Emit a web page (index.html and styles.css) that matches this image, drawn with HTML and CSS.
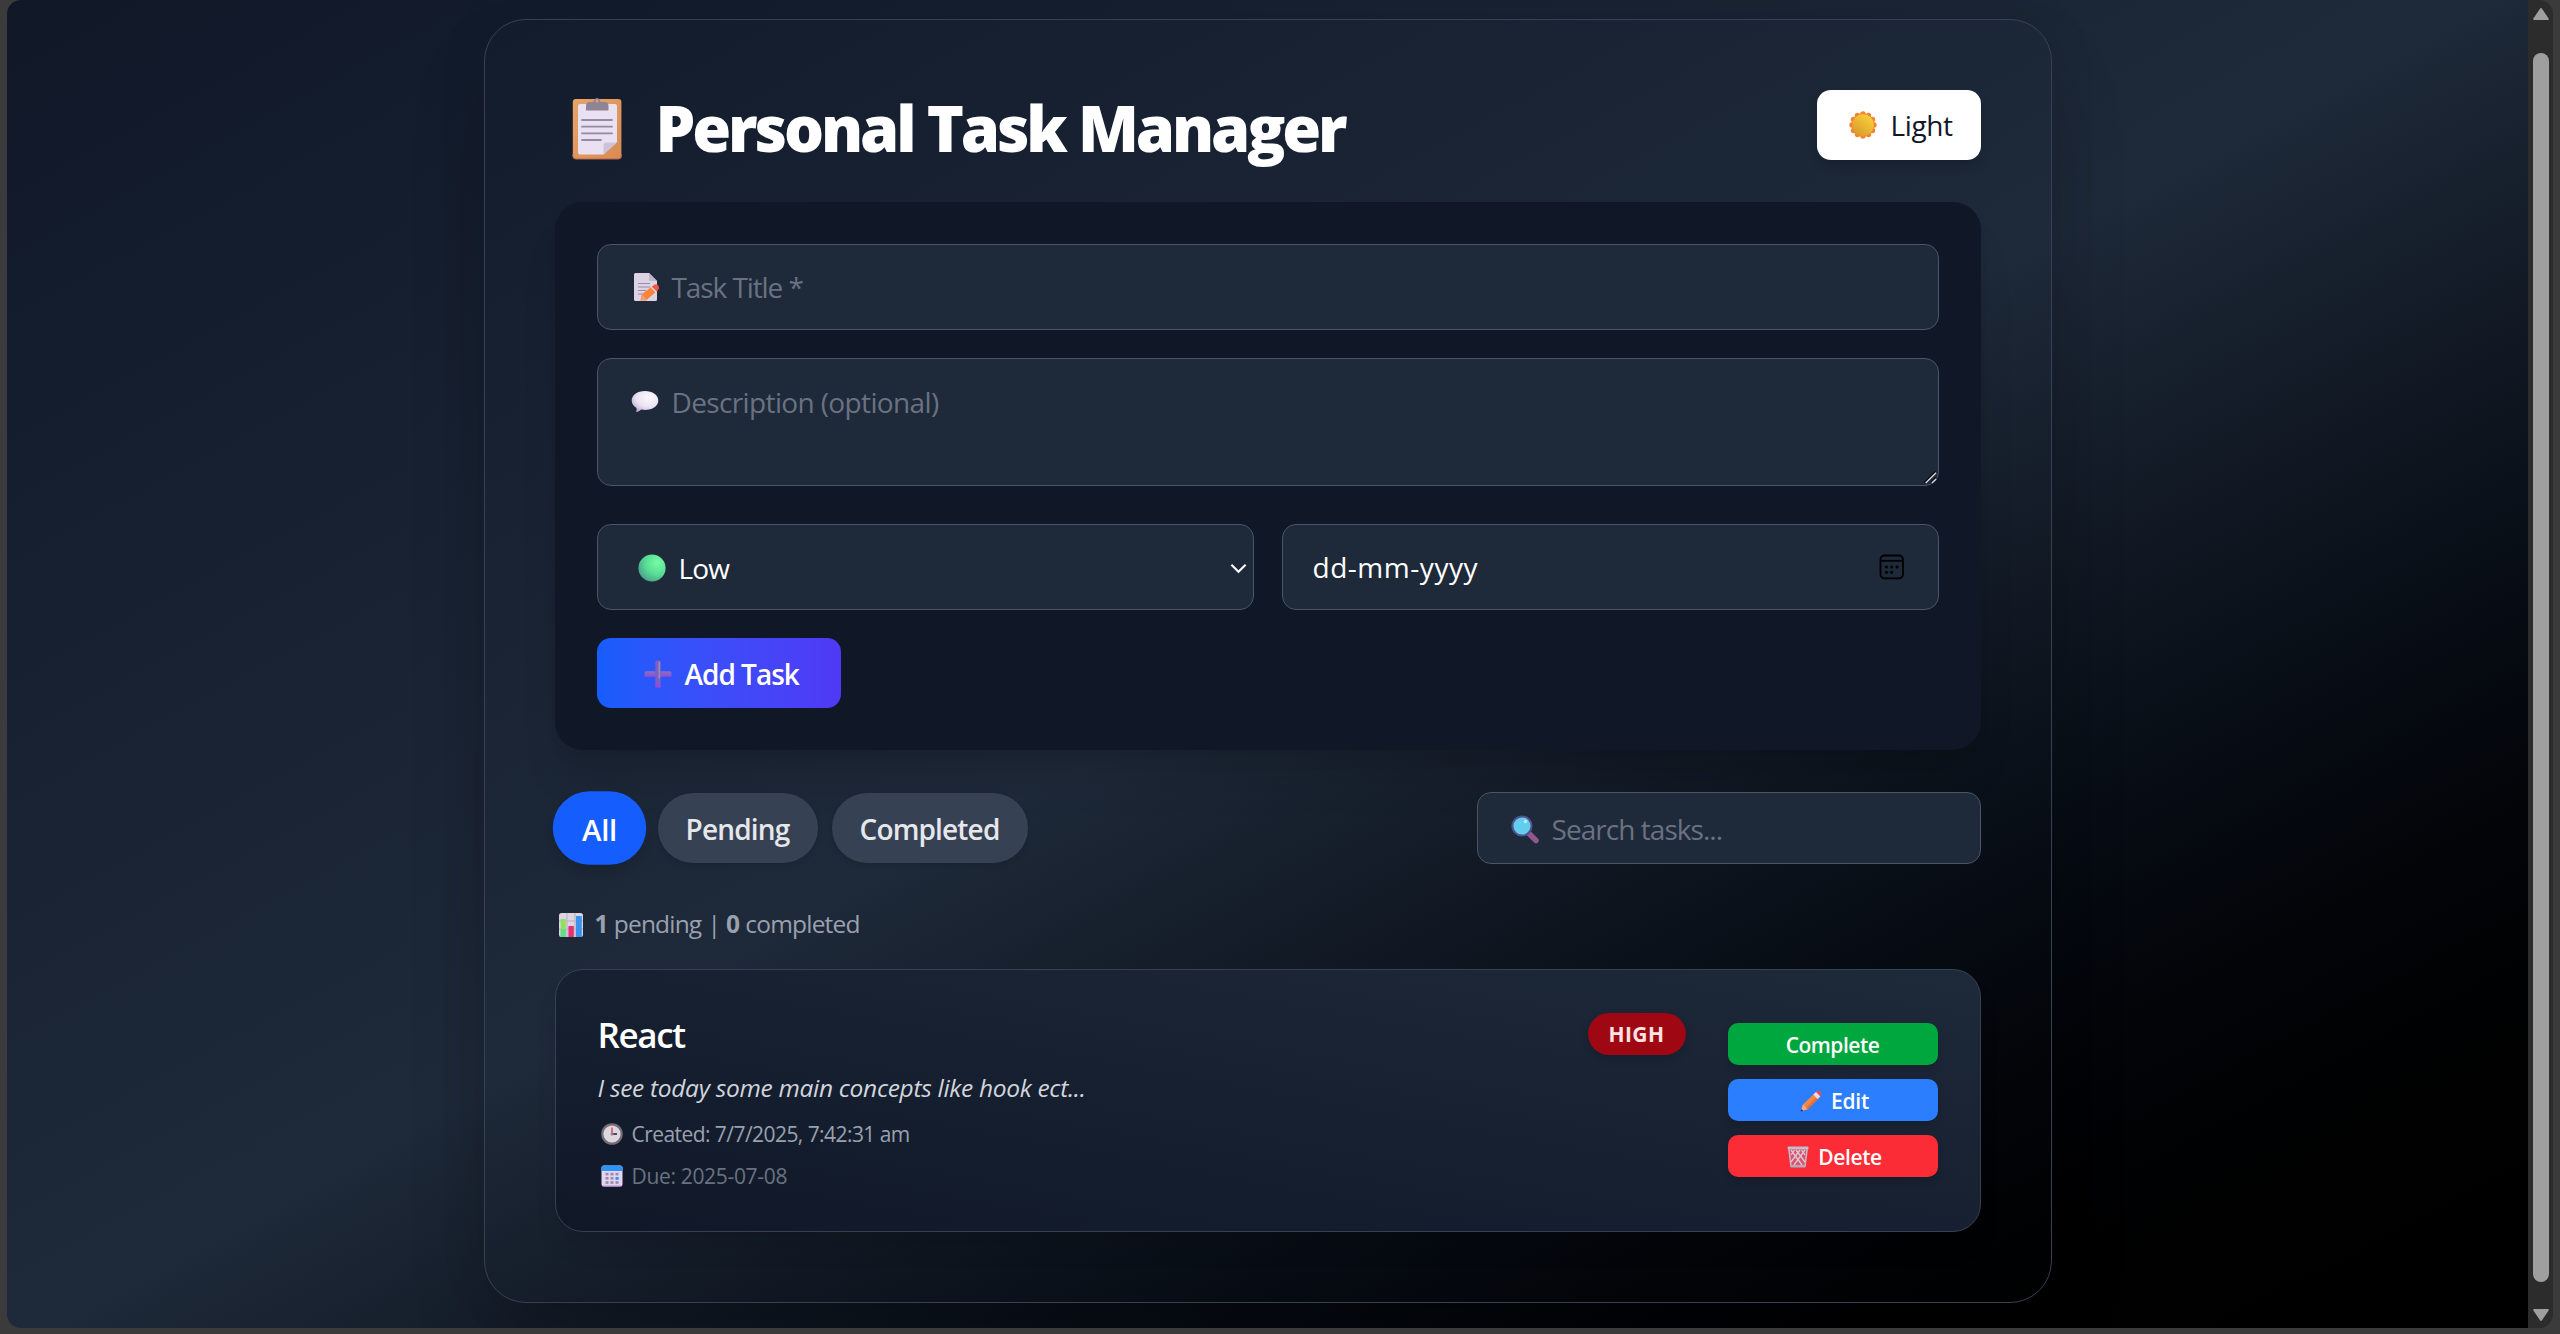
FILE: index.html
```
<!DOCTYPE html>
<html lang="en">
<head>
<meta charset="utf-8">
<title>Personal Task Manager</title>
<link rel="stylesheet" href="styles.css">
</head>
<body>
<div class="page">
  <main class="panel">
    <header class="header">
      <svg class="clipboard" viewBox="0 0 50 64">
        <defs><linearGradient id="board" x1="0" y1="0" x2="1" y2="1"><stop offset="0" stop-color="#e8a468"/><stop offset="1" stop-color="#d98b54"/></linearGradient></defs>
        <rect x="0.8" y="3" width="48.6" height="60" rx="3" fill="url(#board)"/>
        <path d="M0.8 58v2a3 3 0 0 0 3 3h42.600a3 3 0 0 0 3-3v-2" fill="none" stroke="#b5644c" stroke-width="1"/>
        <path d="M8 8h35a2 2 0 0 1 2 2v36L31.500 58.500H8a2 2 0 0 1-2-2V10a2 2 0 0 1 2-2z" fill="#e9e1f2"/>
        <path d="M31.500 58.500V49a2.500 2.500 0 0 1 2.500-2.500h11z" fill="#cdc3d8"/>
        <path d="M14 14.500V10a4 4 0 0 1 4-4h2c1.500 0 2-.6 2.200-1.800a2.900 2.900 0 0 1 5.600 0C28 5.400 28.500 6 30 6h2.500a4 4 0 0 1 4 4v4.500z" fill="#8f8494"/>
        <circle cx="25" cy="5" r="1.500" fill="#e0a070"/>
        <path d="M10 24h30M10 30.700h30M10 37.400h30M10 44h19" stroke="#938b9e" stroke-width="1.800" stroke-linecap="round"/>
      </svg>
      <h1 class="title">Personal Task Manager</h1>
      <button class="theme-toggle">
        <svg class="emoji" viewBox="0 0 28 28">
          <defs><linearGradient id="sun" x1="1" y1="0" x2="0.200" y2="1"><stop offset="0" stop-color="#ffd83a"/><stop offset="1" stop-color="#d99a2e"/></linearGradient></defs>
          <g fill="#f58432"><circle cx="14" cy="14" r="11.500"/><circle cx="14" cy="3" r="2.700"/><circle cx="14" cy="25" r="2.700"/><circle cx="3" cy="14" r="2.700"/><circle cx="25" cy="14" r="2.700"/><circle cx="8.500" cy="4.500" r="2.700"/><circle cx="19.500" cy="4.500" r="2.700"/><circle cx="8.500" cy="23.500" r="2.700"/><circle cx="19.500" cy="23.500" r="2.700"/><circle cx="4.500" cy="8.500" r="2.700"/><circle cx="4.500" cy="19.500" r="2.700"/><circle cx="23.500" cy="8.500" r="2.700"/><circle cx="23.500" cy="19.500" r="2.700"/></g>
          <circle cx="14" cy="14" r="10.800" fill="url(#sun)"/>
        </svg>
        <span class="light-label">Light</span>
      </button>
    </header>

    <section class="form">
      <div class="field input">
        <svg class="emoji memo" viewBox="0 0 28 28">
          <path d="M3 1.500A1.500 1.500 0 0 1 4.500 0H18l8 8v18.500a1.500 1.500 0 0 1-1.500 1.500h-20A1.500 1.500 0 0 1 3 26.500z" fill="#ddd3e4"/>
          <path d="M18 0l8 8h-6.500A1.500 1.500 0 0 1 18 6.500z" fill="#bfb5ca"/>
          <path d="M7 10.500h12M7 14h12M7 17.500h8M7 21h5" stroke="#978ea3" stroke-width="1.200"/>
          <path d="M9.500 27l1.500-6L22.500 12.500l4.500 4.500L15 27.500z" fill="#fb8438"/>
          <path d="M9.500 28l1.500-7 5 6z" fill="#e9a07e"/>
          <path d="M21 14l4.500 4.500 2.300-2.500c1-3-2-5.500-4.700-4.200z" fill="#f4573f"/>
          <path d="M20 14.800l4.600 4.600 1-1-4.600-4.500z" fill="#e6dcf0"/>
        </svg>
        <span class="ph ph-title">Task Title *</span>
      </div>
      <div class="field textarea">
        <svg class="emoji" viewBox="0 0 28 28">
          <defs><radialGradient id="bubble" cx="0.650" cy="0.300" r="0.800"><stop offset="0" stop-color="#fdf9fd"/><stop offset="0.600" stop-color="#ebe2f2"/><stop offset="1" stop-color="#b9a5d2"/></radialGradient></defs>
          <path d="M14 4c7.500 0 13.300 4 13.300 9.500S21.500 23 14 23c-1.500 0-2.500-.1-3.800-.4C9 23.800 7.500 24.700 6 24.900c-.7.100-.9-.4-.7-1 .4-1 .5-2 .2-3C2.500 19.200 .7 16.700.7 13.500.7 8 6.500 4 14 4z" fill="url(#bubble)"/>
        </svg>
        <span class="ph ph-desc">Description (optional)</span>
        <svg class="grip" viewBox="0 0 14 14"><path d="M0.500 12.500L12.500 0.500M7.500 12.500L12.500 7.500" stroke="#05070c" stroke-width="1.500"/><path d="M1.800 13L13 1.800M8.500 13L13 8.500" stroke="#d5d8dc" stroke-width="1.500"/></svg>
      </div>
      <div class="row">
        <div class="field select">
          <svg class="emoji" viewBox="0 0 28 28">
            <defs><radialGradient id="green" cx="0.700" cy="0.300" r="0.800"><stop offset="0" stop-color="#76fba6"/><stop offset="0.550" stop-color="#59dd94"/><stop offset="1" stop-color="#4a9c8c"/></radialGradient></defs>
            <circle cx="14" cy="14" r="13.600" fill="url(#green)"/>
          </svg>
          <span class="value value-low">Low</span>
          <svg class="chevron" viewBox="0 0 18 11"><path d="M1.500 1.500L9 9L16.500 1.500" fill="none" stroke="#fff" stroke-width="2.200"/></svg>
        </div>
        <div class="field date">
          <span class="value value-date">dd-mm-yyyy</span>
          <svg class="calendar" viewBox="0 0 26 26"><rect x="1.500" y="1.500" width="22.500" height="22.800" rx="4" fill="none" stroke="#000" stroke-width="1.800"/><path d="M1.500 6.800h22.500" stroke="#000" stroke-width="1.800"/><g fill="#000"><circle cx="7.500" cy="13" r="1.600"/><circle cx="12.700" cy="13" r="1.600"/><circle cx="18" cy="13" r="1.600"/><circle cx="7.500" cy="18.300" r="1.600"/><circle cx="12.700" cy="18.300" r="1.600"/></g></svg>
        </div>
      </div>
      <button class="add">
        <svg class="emoji" viewBox="0 0 28 28">
          <defs><linearGradient id="plus" x1="0" y1="0" x2="0" y2="1"><stop offset="0" stop-color="#8077b4"/><stop offset="1" stop-color="#9748e0"/></linearGradient></defs>
          <rect x="0.500" y="11.300" width="27" height="5.400" rx="1.500" fill="url(#plus)"/>
          <rect x="11.300" y="0.500" width="5.400" height="27" rx="1.500" fill="#7b5fc4"/>
          <rect x="14.500" y="1.500" width="1.600" height="17" fill="#9b8bbd"/>
          <rect x="11.300" y="24" width="5.400" height="3.500" rx="1.500" fill="#9748e0"/>
        </svg>
        <span class="add-label">Add Task</span>
      </button>
    </section>

    <div class="toolbar">
      <nav class="filters">
        <button class="pill active"><span class="pill-all">All</span></button>
        <button class="pill pending"><span>Pending</span></button>
        <button class="pill completed"><span>Completed</span></button>
      </nav>
      <div class="field search">
        <svg class="emoji" viewBox="0 0 28 28">
          <path d="M18 18.500l7 7" stroke="#8f568f" stroke-width="5.500" stroke-linecap="round"/>
          <circle cx="11" cy="11" r="9.600" fill="#62cdec" stroke="#53508f" stroke-width="2"/>
          <circle cx="14.500" cy="6.500" r="1.800" fill="#b5ecfa"/>
        </svg>
        <span class="ph ph-search">Search tasks...</span>
      </div>
    </div>

    <p class="stats">
      <svg class="chart" viewBox="0 0 24 24"><rect width="24" height="24" rx="2.500" fill="#ddd6e2"/><path d="M0 8h24M0 16h24M8 0v24M16 0v24" stroke="#c3b9cb" stroke-width="1.400"/><rect x="1.600" y="6" width="5.200" height="18" fill="#8fe25f"/><rect x="1.600" y="16" width="5.200" height="8" fill="#66d98a"/><rect x="9.400" y="13" width="5.400" height="11" fill="#e63075"/><rect x="17" y="3" width="5.800" height="21" fill="#3b93ec"/></svg>
      <span class="stats-text"><b>1</b> pending | <b>0</b> completed</span>
    </p>

    <article class="task">
      <div class="info">
        <h2 class="task-title">React</h2>
        <p class="task-desc">I see today some main concepts like hook ect...</p>
        <p class="meta created">
          <svg class="meta-icon" viewBox="0 0 22 22"><circle cx="11" cy="11" r="9.700" fill="#dcd8de" stroke="#776d75" stroke-width="2.200"/><path d="M11 4.500V11" stroke="#ee3f66" stroke-width="1.500"/><path d="M11 11h5" stroke="#2f2450" stroke-width="1.600"/><circle cx="11" cy="11" r="1.500" fill="#8e8398"/></svg>
          <span>Created: 7/7/2025, 7:42:31 am</span>
        </p>
        <p class="meta due">
          <svg class="meta-icon" viewBox="0 0 22 22"><rect x="0.500" y="0.500" width="21" height="21" rx="2.500" fill="#e4d5ef"/><path d="M.5 6V3A2.500 2.500 0 0 1 3 .5h16A2.500 2.500 0 0 1 21.500 3v3z" fill="#2d94f7"/><path d="M1.500 20.800h19" stroke="#c9a3e6" stroke-width="1.200"/><g fill="#978aab"><rect x="4.500" y="7.800" width="3" height="2.600"/><rect x="9.500" y="7.800" width="3" height="2.600"/><rect x="14.500" y="7.800" width="3" height="2.600"/><rect x="4.500" y="12" width="3" height="2.600"/><rect x="9.500" y="12" width="3" height="2.600"/><rect x="4.500" y="16.200" width="3" height="2.600"/><rect x="9.500" y="16.200" width="3" height="2.600"/><rect x="14.500" y="16.200" width="3" height="2.600"/></g><rect x="14.500" y="12" width="3.200" height="2.800" fill="#2d94f7"/></svg>
          <span>Due: 2025-07-08</span>
        </p>
      </div>
      <span class="badge">HIGH</span>
      <div class="actions">
        <button class="action complete"><span>Complete</span></button>
        <button class="action edit">
          <svg class="meta-icon" viewBox="0 0 22 22"><path d="M1 21l2-6.500L14.500 3.500l4.500 4.500L7.500 19.200z" fill="#fa8740"/><path d="M6 17.500L17.500 6.500 19 8 7.500 19.200z" fill="#ee6b35"/><path d="M1 21l2-6.500 4.500 4.700z" fill="#eeaa8c"/><path d="M.6 21.500l.8-2.500 1.700 1.700z" fill="#4a1c38"/><path d="M15.500 2.500l2-1.500c1.500-.8 4.600 2 3.500 4l-1.500 2z" fill="#f5483f"/><path d="M13.300 4.600l2.700-2.500 4.300 4.300-2.700 2.700z" fill="#e6dcf4"/></svg>
          <span>Edit</span>
        </button>
        <button class="action delete">
          <svg class="meta-icon" viewBox="0 0 22 22"><path d="M1.800 2.500h18.400L18 20H4z" fill="#e0526a" stroke="#c2b8c6" stroke-width="1.600"/><path d="M4 4l11 15M9 4l9 12M14.500 4l3.500 5M18 4L7 19M13 4L4 16M7.500 4L4 9" stroke="#d6ccda" stroke-width="1.300"/><rect x="0.500" y="0.500" width="21" height="2.800" rx="1" fill="#c6bccb"/><rect x="3.300" y="19" width="15.400" height="2.600" rx="1" fill="#b5a9bb"/></svg>
          <span>Delete</span>
        </button>
      </div>
    </article>
  </main>
</div>
<div class="scrollbar">
  <svg class="arrow" viewBox="0 0 16 12"><path d="M8 1L14.800 11H1.200z" fill="#9f9f9f" stroke="#9f9f9f" stroke-width="2" stroke-linejoin="round"/></svg>
  <div class="thumb"></div>
  <svg class="arrow" viewBox="0 0 16 12"><path d="M8 11L14.800 1H1.200z" fill="#9f9f9f" stroke="#9f9f9f" stroke-width="2" stroke-linejoin="round"/></svg>
</div>
</body>
</html>
```
FILE: styles.css
```
* { box-sizing: border-box; margin: 0; padding: 0; }

body {
  display: flex;
  height: 1334px;
  padding: 0 7px 6px 7px;
  overflow: hidden;
  background: #3b3b3b;
  color: #fff;
  font-family: "Open Sans", "Noto Sans", sans-serif;
  font-size: 28px;
}

button { border: 0; color: inherit; font: inherit; }
svg { display: block; flex: none; overflow: visible; }
span { white-space: nowrap; }

.page {
  flex: 1;
  display: flex;
  justify-content: center;
  align-items: flex-start;
  padding-top: 19px;
  overflow: hidden;
  border-radius: 14px 0 0 14px;
  background: linear-gradient(to bottom right in oklab, #101828, #1e2939, #000) 0 -23px / 100% 1368px no-repeat;
}

.panel {
  display: flex;
  flex-direction: column;
  width: 1568px;
  height: 1284px;
  padding: 70px;
  border: 1px solid #364153;
  border-radius: 42px;
  box-shadow: 0 44px 88px -21px rgba(0, 0, 0, .25), 0 0 50px rgba(0, 0, 0, .08);
}
.panel > * { flex-shrink: 0; }

.header { display: flex; height: 70px; }
.clipboard { width: 50px; height: 64px; margin: 6px 34px 0 17px; }
.title {
  flex: 1;
  padding-top: 3px;
  font-size: 63px;
  font-weight: 800;
  line-height: 70px;
  letter-spacing: -.0495em;
  white-space: nowrap;
}
.theme-toggle {
  display: flex;
  align-items: center;
  gap: 14px;
  width: 164px;
  height: 70px;
  padding-left: 32px;
  border-radius: 14px;
  background: #fff;
  color: #101828;
  box-shadow: 0 7px 11px -2px rgba(0, 0, 0, .2);
}
.emoji { width: 28px; height: 28px; }
.light-label { letter-spacing: -.013em; }

.form {
  display: flex;
  flex-direction: column;
  height: 548px;
  margin-top: 42px;
  padding: 42px;
  border-radius: 28px;
  background: #101726;
  box-shadow: 0 35px 44px -9px rgba(0, 0, 0, .1), 0 14px 18px -10px rgba(0, 0, 0, .1);
}
.field {
  display: flex;
  align-items: center;
  border: 1px solid #4a5565;
  border-radius: 14px;
  background: #1e2939;
}
.ph { color: #6a7282; }
.input { height: 86px; padding-left: 33px; gap: 13px; }
.ph-title { letter-spacing: -.0388em; }
.textarea {
  position: relative;
  align-items: flex-start;
  height: 128px;
  margin-top: 28px;
  padding: 24px 0 0 33px;
  gap: 13px;
}
.textarea .emoji { margin-top: 4px; }
.ph-desc { letter-spacing: -.0225em; line-height: 38px; }
.grip { position: absolute; right: 1px; bottom: 1px; width: 13px; height: 13px; }
.row { display: grid; grid-template-columns: 1fr 1fr; gap: 28px; margin-top: 38px; }
.select { height: 86px; padding: 2px 6px 0 40px; gap: 13px; }
.value-low { flex: 1; letter-spacing: -.0288em; }
.chevron { width: 17px; height: 11px; }
.date { height: 86px; padding: 0 33px 0 30px; justify-content: space-between; }
.value-date { letter-spacing: .019em; }
.calendar { width: 26px; height: 26px; }
.add {
  display: flex;
  align-items: center;
  gap: 13px;
  width: 244px;
  height: 70px;
  margin-top: 28px;
  padding: 1px 0 0 47px;
  border-radius: 14px;
  background: linear-gradient(to right in oklab, #155dfc, #4f39f6);
  font-weight: 600;
}
.add-label { letter-spacing: -.036em; }

.toolbar { display: flex; justify-content: space-between; align-items: center; height: 72px; margin-top: 42px; }
.filters { display: flex; gap: 14px; }
.pill {
  height: 70px;
  padding-top: 1px;
  border-radius: 35px;
  background: #364153;
  color: #e5e7eb;
  font-weight: 600;
  letter-spacing: -.03em;
  box-shadow: 0 2px 5px rgba(0, 0, 0, .1);
}
.active {
  width: 89px;
  background: #155dfc;
  color: #fff;
  transform: scale(1.05);
  letter-spacing: -.01em;
  box-shadow: 0 7px 11px -2px rgba(0, 0, 0, .15);
}
.pending { width: 160px; }
.completed { width: 196px; }
.search { width: 504px; height: 72px; padding: 1px 0 0 33px; gap: 13px; }
.ph-search { letter-spacing: -.034em; }

.stats { display: flex; align-items: center; gap: 12px; height: 35px; margin: 42px 0 28px; padding-left: 4px; color: #99a1af; font-size: 24.5px; }
.chart { width: 24px; height: 24px; margin-top: 2px; }
.stats-text { letter-spacing: -.033em; word-spacing: .02em; }

.task {
  display: flex;
  align-items: flex-start;
  height: 263px;
  padding: 42px;
  border: 1px solid #364153;
  border-radius: 28px;
  background: linear-gradient(to top right in oklab, #101828, #1e2939);
  box-shadow: 0 18px 26px -5px rgba(0, 0, 0, .1);
}
.info { flex: 1; padding-top: 1px; }
.task-title { font-size: 35px; font-weight: 600; line-height: 44px; letter-spacing: -.039em; }
.task-desc { margin-top: 13px; color: #d1d5dc; font-size: 24.5px; font-style: italic; line-height: 35px; letter-spacing: -.0124em; }
.meta { display: flex; align-items: center; gap: 9px; height: 28px; margin-top: 14px; padding-left: 3px; font-size: 21px; }
.task-desc + .meta { margin-top: 15px; }
.meta-icon { width: 22px; height: 22px; }
.created { color: #99a1af; letter-spacing: -.0265em; }
.due { color: #6a7282; letter-spacing: -.0155em; }
.badge {
  width: 98px;
  height: 42px;
  margin-top: 1px;
  border-radius: 21px;
  background: #9f0712;
  color: #ffe2e2;
  font-size: 21px;
  font-weight: 700;
  line-height: 43px;
  letter-spacing: .02em;
  text-align: center;
  box-shadow: 0 4px 8px rgba(0, 0, 0, .15);
}
.actions { display: flex; flex-direction: column; gap: 14px; width: 210px; margin: 11px 0 0 42px; }
.action {
  display: flex;
  align-items: center;
  justify-content: center;
  gap: 9px;
  height: 42px;
  padding-top: 2px;
  border-radius: 10px;
  font-size: 21px;
  font-weight: 600;
  box-shadow: 0 5px 9px -1px rgba(0, 0, 0, .15);
}
.complete { background: #00a63e; letter-spacing: -.0234em; }
.edit { padding-left: 4px; background: #2b7fff; letter-spacing: -.0094em; }
.delete { padding-left: 4px; background: #fb2c36; letter-spacing: -.0173em; }

.scrollbar {
  display: flex;
  flex-direction: column;
  align-items: center;
  justify-content: space-between;
  width: 25px;
  padding: 8px 0 7px;
  border-radius: 0 14px 14px 0;
  background: #2c2c2c;
}
.arrow { width: 16px; height: 12px; }
.thumb { width: 16px; height: 1229px; margin-top: 6px; border-radius: 8px; background: #9f9f9f; }
```
